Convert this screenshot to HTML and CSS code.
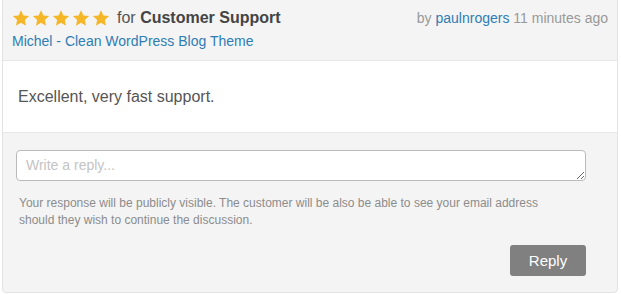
FILE: index.html
```html
<!DOCTYPE html>
<html lang="en">
<head>
  <meta charset="UTF-8">
  <title>Review</title>
  <link rel="stylesheet" href="styles.css">
</head>
<body>

  <div class="review">
    <div class="review-head">
      <div class="head-left">
        <div class="rating">
          <span class="stars">
            <svg viewBox="0 0 24 24"><path d="M12 1.5l3.2 7.1 7.6.8-5.7 5.2 1.6 7.6L12 18.3l-6.7 3.9 1.6-7.6L1.2 9.4l7.6-.8z"/></svg>
            <svg viewBox="0 0 24 24"><path d="M12 1.5l3.2 7.1 7.6.8-5.7 5.2 1.6 7.6L12 18.3l-6.7 3.9 1.6-7.6L1.2 9.4l7.6-.8z"/></svg>
            <svg viewBox="0 0 24 24"><path d="M12 1.5l3.2 7.1 7.6.8-5.7 5.2 1.6 7.6L12 18.3l-6.7 3.9 1.6-7.6L1.2 9.4l7.6-.8z"/></svg>
            <svg viewBox="0 0 24 24"><path d="M12 1.5l3.2 7.1 7.6.8-5.7 5.2 1.6 7.6L12 18.3l-6.7 3.9 1.6-7.6L1.2 9.4l7.6-.8z"/></svg>
            <svg viewBox="0 0 24 24"><path d="M12 1.5l3.2 7.1 7.6.8-5.7 5.2 1.6 7.6L12 18.3l-6.7 3.9 1.6-7.6L1.2 9.4l7.6-.8z"/></svg>
          </span>
          <span class="for">for <strong>Customer Support</strong></span>
        </div>
        <a class="item" href="#">Michel - Clean WordPress Blog Theme</a>
      </div>
      <div class="meta">by <a href="#">paulnrogers</a> 11 minutes ago</div>
    </div>

    <div class="review-body">
      Excellent, very fast support.
    </div>

    <form class="review-reply">
      <textarea placeholder="Write a reply..."></textarea>
      <p class="hint">Your response will be publicly visible. The customer will be also be able to see your email address should they wish to continue the discussion.</p>
      <div class="actions">
        <button type="submit">Reply</button>
      </div>
    </form>
  </div>

</body>
</html>
```

FILE: styles.css
```css
body {
  margin: 0;
  background: #fff;
  font-family: "Liberation Sans", Arial, sans-serif;
}

.review {
  width: 614px;
  margin: -1px 0 0 2px;
  border: 1px solid #e3e3e3;
  border-radius: 0 0 4px 4px;
  background: #f4f4f4;
}

.review-head {
  display: flex;
  justify-content: space-between;
  padding: 8px 9px 10px 9px;
  border-bottom: 1px solid #e6e6e6;
}

.rating {
  display: flex;
  align-items: center;
  height: 20px;
}

.stars {
  display: flex;
  gap: 2px;
  margin-right: 7px;
}

.stars svg {
  width: 18px;
  height: 18px;
  fill: #f5b727;
}

.for {
  font-size: 16px;
  color: #555;
}

.for strong {
  color: #444;
}

.item {
  display: block;
  margin-top: 4px;
  font-size: 14px;
  line-height: 18px;
  color: #2f7db5;
  text-decoration: none;
}

.meta {
  font-size: 14px;
  line-height: 20px;
  color: #999;
}

.meta a {
  color: #2f7db5;
  text-decoration: none;
}

.review-body {
  background: #fff;
  padding: 26px 15px 25px;
  font-size: 16px;
  line-height: 20px;
  color: #555;
  border-bottom: 1px solid #e8e8e8;
}

.review-reply {
  padding: 17px 31px 16px 13px;
}

textarea {
  display: block;
  box-sizing: border-box;
  width: 100%;
  height: 31px;
  padding: 6px 9px;
  border: 1px solid #bbb;
  border-radius: 4px;
  font-family: "Liberation Sans", Arial, sans-serif;
  font-size: 14px;
  color: #555;
  background: #fff;
}

textarea::placeholder {
  color: #c4c4c4;
}

.hint {
  max-width: 545px;
  margin: 14px 0 0 3px;
  font-size: 12px;
  line-height: 17px;
  color: #8c8c8c;
}

.actions {
  display: flex;
  justify-content: flex-end;
  margin-top: 16px;
}

button {
  width: 76px;
  height: 31px;
  border: none;
  border-radius: 3px;
  background: #808080;
  color: #fff;
  font-family: "Liberation Sans", Arial, sans-serif;
  font-size: 15px;
  cursor: pointer;
}
```
